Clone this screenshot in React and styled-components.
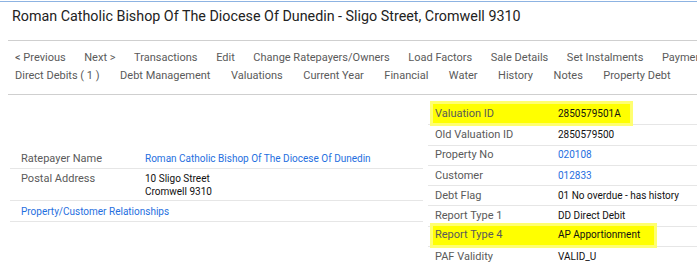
import React from "react";
import styled, { createGlobalStyle } from "styled-components";

const Global = createGlobalStyle`
  html, body { margin: 0; padding: 0; background: #fff; }
  body { font-family: Roboto, "Liberation Sans", Arial, sans-serif; overflow: hidden; }
`;

const Page = styled.div`
  width: 697px;
  height: 265px;
  overflow: hidden;
  padding-top: 1px;
  box-sizing: border-box;
`;

const TopRule = styled.div`
  height: 1px;
  background: #8db3e2;
`;

const Title = styled.h1`
  margin: 0;
  padding: 6px 12px 0;
  height: 32px;
  font-size: 14.3px;
  line-height: 16px;
  font-weight: 400;
  color: #222;
  white-space: nowrap;
`;

const Nav = styled.nav`
  margin-left: 8px;
  border-top: 1px solid #cfcfcf;
  border-bottom: 1px solid #cfcfcf;
  padding: 8px 0 9px 7px;
`;

const NavRow = styled.div`
  display: flex;
  gap: ${p => p.$gap}px;
  white-space: nowrap;
  overflow: hidden;
  font-size: 11px;
  line-height: 18px;
  color: #5a5a5a;
`;

const NavItem = styled.span`
  flex: none;
`;

const Main = styled.div`
  display: flex;
  gap: 5px;
  padding-left: 10px;
`;

const LeftTable = styled.div`
  width: 413px;
  margin-top: 53px;
`;

const RightTable = styled.div`
  flex: 1;
  margin-top: 10px;
`;

const LRow = styled.div`
  display: flex;
  align-items: ${p => (p.$multi ? "flex-start" : "center")};
  min-height: 21px;
  padding: ${p => (p.$multi ? "3px 0 2px" : "0")} 11px;
  box-sizing: border-box;
  border-bottom: 1px solid #e6e6e6;
  line-height: 13px;
`;

const LLabel = styled.div`
  width: 124px;
  flex: none;
  font-size: 11px;
  color: #5a5a5a;
`;

const Value = styled.div`
  font-size: 10px;
  color: ${p => (p.$link ? "#1f6fe0" : "#111")};
`;

const RRow = styled.div`
  display: flex;
  align-items: center;
  height: 19.3px;
  padding-left: 7px;
  border-bottom: 1px solid #e6e6e6;
  line-height: 14px;
`;

const Mark = styled.div`
  display: flex;
  align-items: center;
  height: 19px;
  margin: -2px 0 0 -2px;
  padding: 0 ${p => p.$extra}px 0 2px;
  background: #ffff00;
  box-shadow: 0 0 0 3px #ffff70;
`;

const RLabel = styled.div`
  width: 123px;
  flex: none;
  font-size: 11px;
  color: #5a5a5a;
`;

const navRow1 = [
  "< Previous",
  "Next >",
  "Transactions",
  "Edit",
  "Change Ratepayers/Owners",
  "Load Factors",
  "Sale Details",
  "Set Instalments",
  "Payments",
];
const navRow2 = [
  "Direct Debits ( 1 )",
  "Debt Management",
  "Valuations",
  "Current Year",
  "Financial",
  "Water",
  "History",
  "Notes",
  "Property Debt",
];

const right = [
  { l: "Valuation ID", v: "2850579501A", mark: 9 },
  { l: "Old Valuation ID", v: "2850579500" },
  { l: "Property No", v: "020108", link: true },
  { l: "Customer", v: "012833", link: true },
  { l: "Debt Flag", v: "01 No overdue - has history" },
  { l: "Report Type 1", v: "DD Direct Debit" },
  { l: "Report Type 4", v: "AP Apportionment", mark: 14 },
  { l: "PAF Validity", v: "VALID_U" },
];

export default function App() {
  return (
    <Page>
      <Global />
      <TopRule />
      <Title>Roman Catholic Bishop Of The Diocese Of Dunedin - Sligo Street, Cromwell 9310</Title>
      <Nav>
        <NavRow $gap={18.6}>
          {navRow1.map(n => (
            <NavItem key={n}>{n}</NavItem>
          ))}
        </NavRow>
        <NavRow $gap={20.5}>
          {navRow2.map(n => (
            <NavItem key={n}>{n}</NavItem>
          ))}
        </NavRow>
      </Nav>
      <Main>
        <LeftTable>
          <LRow>
            <LLabel>Ratepayer Name</LLabel>
            <Value $link>Roman Catholic Bishop Of The Diocese Of Dunedin</Value>
          </LRow>
          <LRow $multi>
            <LLabel>Postal Address</LLabel>
            <Value>
              10 Sligo Street
              <br />
              Cromwell 9310
            </Value>
          </LRow>
          <LRow>
            <Value $link>Property/Customer Relationships</Value>
          </LRow>
        </LeftTable>
        <RightTable>
          {right.map(r => {
            const inner = (
              <>
                <RLabel>{r.l}</RLabel>
                <Value $link={r.link}>{r.v}</Value>
              </>
            );
            return (
              <RRow key={r.l}>
                {r.mark ? <Mark $extra={r.mark}>{inner}</Mark> : inner}
              </RRow>
            );
          })}
        </RightTable>
      </Main>
    </Page>
  );
}
